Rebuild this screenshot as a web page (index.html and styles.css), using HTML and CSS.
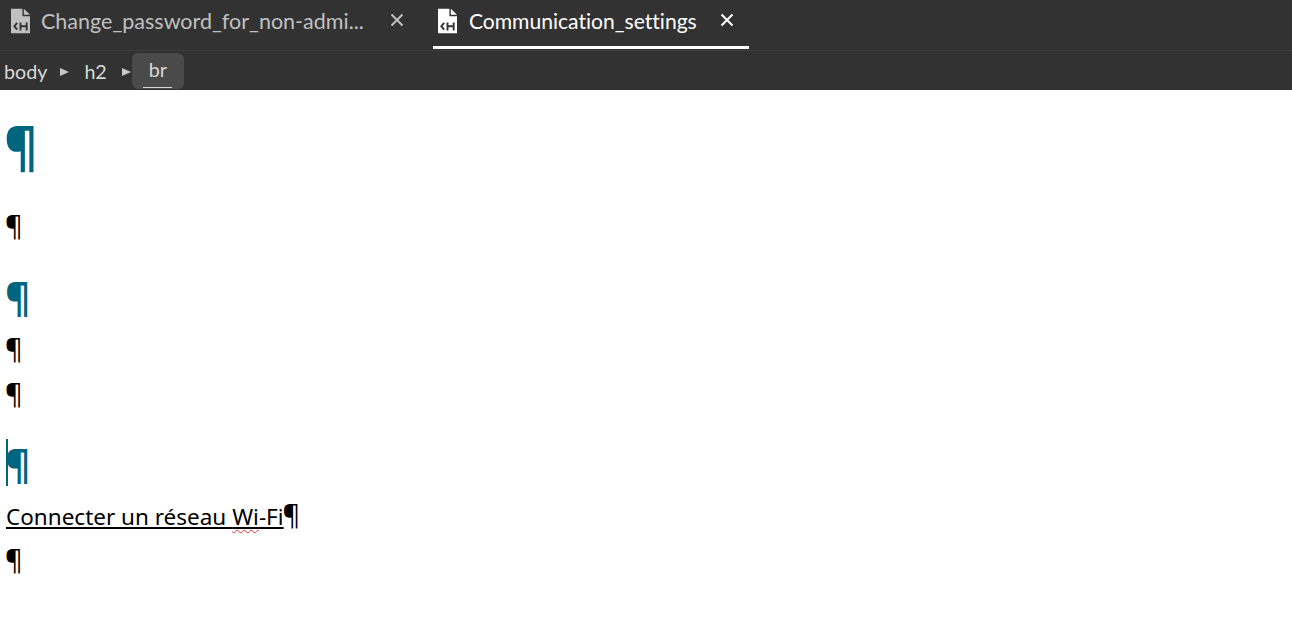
FILE: index.html
```html
<!DOCTYPE html>
<html>
<head>
    <title>Communication_settings</title>
    <link rel="stylesheet" href="styles.css">
</head>
<body>
    <div class="tab-bar">
        <div class="tab">
            <svg class="file-icon" viewBox="0 0 20 26"><path fill="currentColor" d="M0 0H12V8H20V26H0Z"/><path fill="currentColor" d="M13.500 0L20 6.500H13.500Z"/><path fill="none" stroke="#333" stroke-width="2" d="M6.500 15L3.500 18.500L6.500 22M10 14.500V23M16.500 14.500V23M10 18.500H16.500"/></svg>
            <span class="tab-name">Change_password_for_non-admi...</span>
            <svg class="tab-close" viewBox="0 0 14 14"><path fill="none" stroke="currentColor" stroke-width="2" d="M1.500 1.500L12.500 12.500M12.500 1.500L1.500 12.500"/></svg>
        </div>
        <div class="tab active">
            <svg class="file-icon" viewBox="0 0 20 26"><path fill="currentColor" d="M0 0H12V8H20V26H0Z"/><path fill="currentColor" d="M13.500 0L20 6.500H13.500Z"/><path fill="none" stroke="#333" stroke-width="2" d="M6.500 15L3.500 18.500L6.500 22M10 14.500V23M16.500 14.500V23M10 18.500H16.500"/></svg>
            <span class="tab-name">Communication_settings</span>
            <svg class="tab-close" viewBox="0 0 14 14"><path fill="none" stroke="currentColor" stroke-width="2" d="M1.500 1.500L12.500 12.500M12.500 1.500L1.500 12.500"/></svg>
        </div>
    </div>
    <div class="breadcrumbs">
        <span class="crumb">body</span>
        <span class="crumb-arrow"></span>
        <span class="crumb">h2</span>
        <span class="crumb-arrow last"></span>
        <span class="crumb current"><span class="crumb-label">br</span></span>
    </div>
    <div class="content">
        <h1>¶</h1>
        <p><span class="mark">¶</span></p>
        <h2>¶</h2>
        <p><span class="mark">¶</span></p>
        <p><span class="mark">¶</span></p>
        <h2 class="has-caret"><span class="caret"></span>¶</h2>
        <p><a href="#">Connecter un réseau <span class="typo">Wi</span>-Fi</a><span class="mark">¶</span></p>
        <p><span class="mark">¶</span></p>
    </div>
</body>
</html>
```

FILE: styles.css
```css
html, body {
    margin: 0;
    padding: 0;
    background: white;
    overflow: hidden;
}

body {
    font-family: "Noto Sans", "Open Sans", sans-serif;
}

.tab-bar {
    display: flex;
    height: 51px;
    box-sizing: border-box;
    background: #323232;
    border-bottom: 1px solid #3d3d3d;
}

.tab {
    display: flex;
    align-items: center;
    height: 50px;
    box-sizing: border-box;
    padding: 0 0 8px 11px;
    color: #c0c0c0;
    font-family: "Lato", sans-serif;
    font-size: 21.500px;
    font-variant-ligatures: none;
}

.tab.active {
    margin-left: 29px;
    height: 49px;
    padding: 0 15px 5px 5px;
    color: white;
    font-size: 21.100px;
    border-bottom: 3px solid white;
}

.file-icon {
    width: 19px;
    height: 26px;
    margin-right: 11px;
}

.tab.active .file-icon {
    margin-right: 12px;
}

.tab-name {
    white-space: nowrap;
}

.tab-close {
    width: 14px;
    height: 14px;
    margin-left: 26px;
    margin-bottom: 2px;
}

.tab.active .tab-close {
    margin-left: 23px;
}

.breadcrumbs {
    display: flex;
    align-items: center;
    height: 39px;
    padding-left: 4px;
    background: #323232;
    color: #d8d8d8;
    font-family: "Lato", sans-serif;
    font-size: 19.700px;
}

.crumb {
    padding-top: 2px;
}

.crumb-arrow {
    width: 0;
    height: 0;
    margin: 2px 15px 0 13px;
    border-left: 9px solid #c8c8c8;
    border-top: 4.500px solid transparent;
    border-bottom: 4.500px solid transparent;
}

.crumb-arrow.last {
    margin-left: 15px;
    margin-right: 1px;
}

.crumb.current {
    display: flex;
    justify-content: center;
    width: 52px;
    height: 36px;
    box-sizing: border-box;
    padding-top: 5px;
    background: #4a4a4a;
    border-radius: 6px;
}

.crumb-label {
    height: 29px;
    width: 29px;
    text-align: center;
    border-bottom: 1px solid #d8d8d8;
}

.content {
    padding: 0 6px;
    color: black;
}

.content h1 {
    margin: 0 0 23px -2px;
    padding-top: 16px;
    height: 80px;
    color: #00667f;
    font-size: 52px;
    font-weight: bold;
    line-height: 80px;
}

.content h2 {
    margin: 24px 0 7px -1px;
    color: #00667f;
    font-size: 39px;
    font-weight: bold;
    line-height: 56px;
}

.content h2.has-caret {
    margin-top: 23px;
    margin-bottom: 6px;
}

.content p {
    margin: 0 0 9px;
    font-size: 22.500px;
    line-height: 34px;
}

.mark {
    margin-left: -1px;
    font-size: 27px;
}

.content a {
    color: black;
    text-decoration: underline;
    text-decoration-thickness: 2px;
    text-underline-offset: 2px;
}

.has-caret {
    position: relative;
}

.caret {
    position: absolute;
    left: 1px;
    top: 3px;
    width: 2px;
    height: 47px;
    background: #00667f;
}

.typo {
    text-decoration: underline wavy #d33;
    text-decoration-thickness: 1px;
    text-underline-offset: 4px;
}
```
